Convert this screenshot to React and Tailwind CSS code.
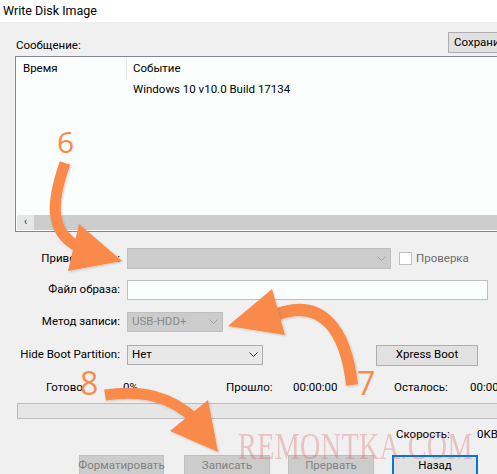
const ORANGE = "#fa8a48";

function Chevron({ color = "#a0a0a0" }) {
  return (
    <svg width="9" height="6" viewBox="0 0 9 6" className="shrink-0">
      <path d="M0.5 0.5 L4.5 4.5 L8.5 0.5" fill="none" stroke={color} strokeWidth="1" />
    </svg>
  );
}

function Btn({ children, className = "" }) {
  return (
    <div className={`h-[21px] flex items-center justify-center shrink-0 whitespace-nowrap ${className}`}>{children}</div>
  );
}

function Arrows() {
  return (
    <svg width="497" height="474" viewBox="0 0 497 474" className="absolute inset-0 pointer-events-none">
      <defs>
        <filter id="sh" x="-20%" y="-20%" width="140%" height="140%">
          <feDropShadow dx="1" dy="1" stdDeviation="1" floodColor="#000" floodOpacity="0.18" />
        </filter>
      </defs>
      <g filter="url(#sh)" fill="none" stroke={ORANGE} strokeWidth="11">
        <path d="M65 163 C52 200 46 236 86 250" />
        <path d="M105 395 C140 390 170 395 196 420" />
        <path d="M278 314 C322 298 346 330 352 385" strokeWidth="12" />
      </g>
      <g filter="url(#sh)" fill={ORANGE}>
        <polygon points="79,224 68,271 122,261" />
        <polygon points="170,431 208,400 218,452" />
        <polygon points="272,289 285,335 228,326" />
      </g>
    </svg>
  );
}

export default function App() {
  return (
    <div className="relative w-[497px] h-[474px] overflow-hidden bg-[#f0f0f0] text-[11.5px] text-black font-['Roboto',sans-serif]">
      <div className="h-[22px] bg-white pl-[3px] flex items-center text-[12.5px]">Write Disk Image</div>

      <div className="pl-[15px]">
        <div className="flex items-end mt-[13px] h-[18px]">
          <div className="w-[433px] shrink-0 pl-[1px] leading-none pb-[2px]">Сообщение:</div>
          <Btn className="w-[60px] h-[18px] bg-[#e1e1e1] border border-[#adadad] justify-start pl-[5px]">Сохранить</Btn>
        </div>

        <div className="mt-[3px] w-[500px] h-[176px] bg-[#fafffe] border-l border-t border-b border-[#828790] flex flex-col">
          <div className="flex h-[24px] items-center">
            <div className="w-[110px] pl-[7px]">Время</div>
            <div className="w-px h-[22px] bg-[#e5e5e5]" />
            <div className="pl-[6px]">Событие</div>
          </div>
          <div className="flex h-[18px] items-center">
            <div className="w-[111px]" />
            <div className="pl-[6px]">Windows 10 v10.0 Build 17134</div>
          </div>
          <div className="flex-1" />
          <div className="flex h-[15px] mb-[1px] ml-[1px] bg-[#cdcdcd]">
            <div className="w-[17px] flex items-center justify-center bg-[#e6e6e6] text-[#555] text-[11px] font-bold">‹</div>
          </div>
        </div>

        <div className="flex items-center mt-[16px] h-[21px]">
          <div className="w-[105px] text-right whitespace-nowrap">Привод диска:</div>
          <div className="ml-[7px] w-[264px] h-[21px] bg-[#cccccc] border border-[#bfbfbf] flex items-center justify-end pr-[4px]">
            <Chevron />
          </div>
          <div className="ml-[8px] w-[13px] h-[13px] bg-white border border-[#bfbfbf]" />
          <div className="ml-[4px] text-[#6d6d6d]">Проверка</div>
        </div>

        <div className="flex items-center mt-[11px] h-[20px]">
          <div className="w-[105px] text-right whitespace-nowrap">Файл образа:</div>
          <div className="ml-[7px] w-[361px] h-[20px] bg-[#fafffe] border border-[#bfbfbf]" />
        </div>

        <div className="flex items-center mt-[12px] h-[20px]">
          <div className="w-[105px] text-right whitespace-nowrap">Метод записи:</div>
          <div className="ml-[7px] w-[96px] h-[20px] bg-[#cccccc] border border-[#bfbfbf] flex items-center justify-between pl-[4px] pr-[4px] text-[#8a8a8a]">
            <span>USB-HDD+</span>
            <Chevron />
          </div>
        </div>

        <div className="flex items-center mt-[13px] h-[20px]">
          <div className="w-[105px] text-right whitespace-nowrap">Hide Boot Partition:</div>
          <div className="ml-[7px] w-[136px] h-[20px] bg-[#e8e8e8] border border-[#adadad] flex items-center justify-between pl-[4px] pr-[4px]">
            <span>Нет</span>
            <Chevron color="#333" />
          </div>
          <Btn className="ml-[113px] w-[102px] h-[20px] bg-[#e1e1e1] border border-[#adadad]">Xpress Boot</Btn>
        </div>

        <div className="flex items-center mt-[14px] h-[18px] whitespace-nowrap">
          <div className="w-[31px] shrink-0" />
          <div className="w-[77px] shrink-0">Готово:</div>
          <div className="w-[103px] shrink-0">0%</div>
          <div className="w-[67px] shrink-0">Прошло:</div>
          <div className="w-[101px] shrink-0">00:00:00</div>
          <div className="w-[76px] shrink-0">Осталось:</div>
          <div className="shrink-0">00:00:00</div>
        </div>

        <div className="mt-[6px] ml-[2px] w-[500px] h-[16px] bg-[#e6e6e6] border border-[#bcbcbc]" />

        <div className="flex items-center mt-[7px] h-[18px] whitespace-nowrap">
          <div className="w-[381px] shrink-0" />
          <div className="w-[81px] shrink-0">Скорость:</div>
          <div className="shrink-0">0KB/s</div>
        </div>

        <div className="flex mt-[11px]">
          <div className="w-[64px] shrink-0" />
          <Btn className="w-[85px] bg-[#cccccc] border border-[#bfbfbf] text-[#838383]">Форматировать</Btn>
          <Btn className="ml-[20px] w-[86px] bg-[#cccccc] border border-[#bfbfbf] text-[#838383]">Записать</Btn>
          <Btn className="ml-[18px] w-[86px] bg-[#cccccc] border border-[#bfbfbf] text-[#838383]">Прервать</Btn>
          <Btn className="ml-[18px] w-[86px] bg-[#e1e1e1] border-2 border-[#0078d7]">Назад</Btn>
        </div>
      </div>

      <div className="absolute left-[238px] top-[427px] origin-left scale-x-[0.74] text-[38px] leading-none tracking-[0.5px] font-['Liberation_Serif',serif] text-[#d23c3c]/25 whitespace-nowrap pointer-events-none">
        REMONTKA.COM
      </div>

      <Arrows />

      <div className="absolute left-[57px] top-[127px] text-[30px] leading-none text-[#fa8a48] font-['Open_Sans',sans-serif]">6</div>
      <div className="absolute left-[80px] top-[367px] text-[32px] leading-none text-[#fa8a48] font-['Open_Sans',sans-serif]">8</div>
      <div className="absolute left-[357px] top-[367px] text-[32px] leading-none text-[#fa8a48] font-['Open_Sans',sans-serif]">7</div>
    </div>
  );
}
